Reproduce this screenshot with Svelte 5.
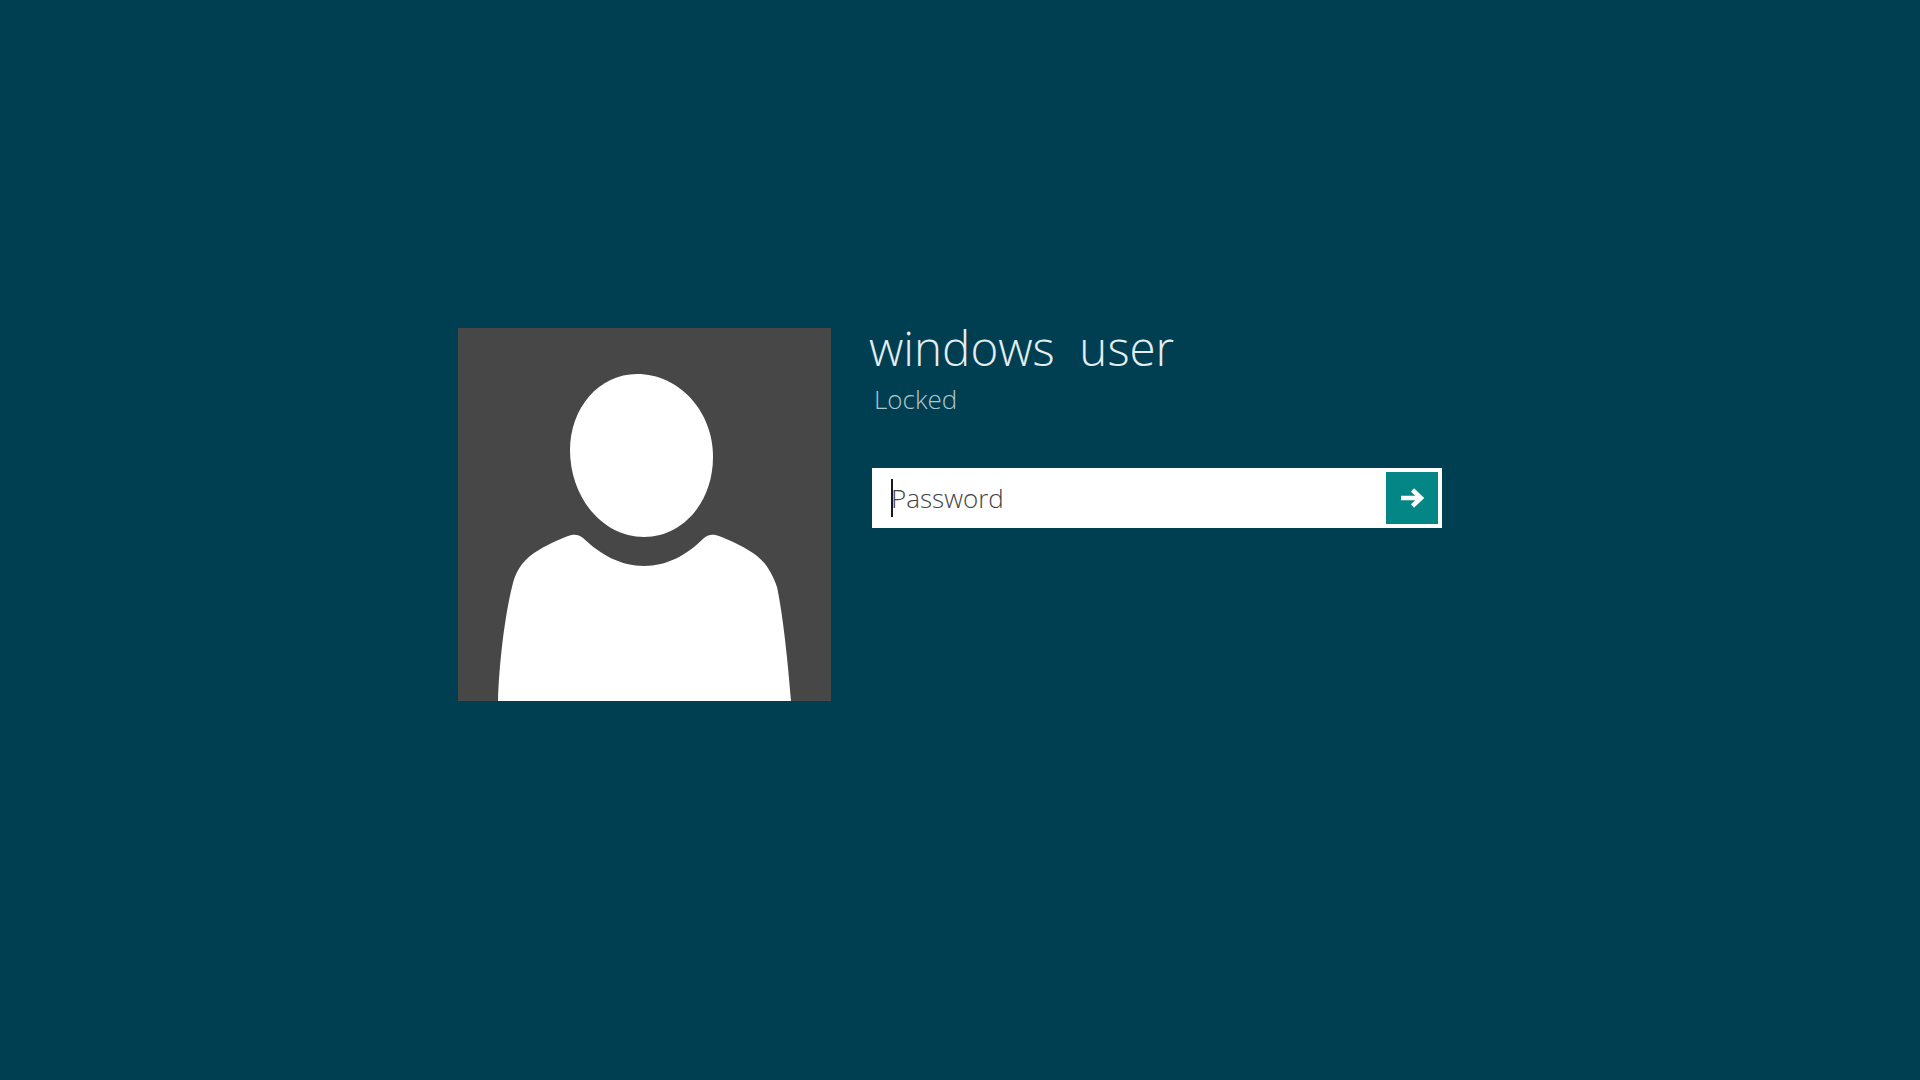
<script>
    let password = $state("");
</script>

<main class="lock-screen">
    <div class="avatar">
        <svg viewBox="0 0 373 373" width="373" height="373">
            <path fill="#fff" d="M179 46 C221 46 255 83 255 129 C255 175 224 209 186 209 C145 209 112 170 112 122 C112 80 141 46 179 46 Z" />
            <path fill="#fff" d="M40 373 C41 335 47 287 54 259 C57 245 63 234 76 225 C88 217 100 212 110 208 C116 206 120 206 125 210 C143 227 163 238 186 238 C209 238 229 227 246 210 C251 206 255 206 261 208 C271 212 283 217 295 225 C308 234 314 245 319 259 C325 287 330 335 333 373 Z" />
        </svg>
    </div>

    <div class="details">
        <div class="user-name">windows&nbsp; user</div>
        <div class="user-status">Locked</div>

        <form class="password-box" onsubmit={(e) => e.preventDefault()}>
            <span class="caret"></span>
            <input type="password" placeholder="Password" bind:value={password} />
            <button type="submit" aria-label="Submit">
                <svg viewBox="0 0 26 22" width="26" height="22">
                    <path d="M2 11 H21 M13.5 3 L22 11 L13.5 19" fill="none" stroke="#fff" stroke-width="4.5" />
                </svg>
            </button>
        </form>
    </div>
</main>

<style>
    :global(body) {
        margin: 0;
        background: #003f52;
    }

    .lock-screen {
        display: flex;
        align-items: flex-start;
        box-sizing: border-box;
        width: 1920px;
        height: 1080px;
        padding: 328px 0 0 458px;
        background: #003f52;
        font-family: "Open Sans", "Noto Sans", sans-serif;
    }

    .avatar {
        width: 373px;
        height: 373px;
        background: #474747;
    }

    .avatar svg {
        display: block;
    }

    .details {
        display: flex;
        flex-direction: column;
        margin-left: 38px;
    }

    .user-name {
        font-size: 47.5px;
        font-weight: 300;
        line-height: 39px;
        color: #e4edf0;
    }

    .user-status {
        font-size: 26px;
        font-weight: 300;
        line-height: 32px;
        color: #b0c6cd;
        margin: 16px 0 0 5px;
    }

    .password-box {
        position: relative;
        display: flex;
        align-items: center;
        box-sizing: border-box;
        width: 570px;
        height: 60px;
        margin: 53px 0 0 3px;
        padding: 4px;
        background: #fff;
    }

    .password-box input {
        flex: 1;
        min-width: 0;
        border: 0;
        outline: 0;
        padding: 0 0 0 15px;
        background: transparent;
        font-family: inherit;
        font-size: 26px;
        font-weight: 300;
    }

    .password-box input::placeholder {
        color: #444;
        opacity: 1;
    }

    .caret {
        position: absolute;
        left: 19px;
        top: 11px;
        width: 2px;
        height: 38px;
        background: #1a1a1a;
    }

    .password-box button {
        display: flex;
        align-items: center;
        justify-content: center;
        width: 52px;
        height: 52px;
        border: 0;
        padding: 0;
        background: #058686;
    }
</style>
